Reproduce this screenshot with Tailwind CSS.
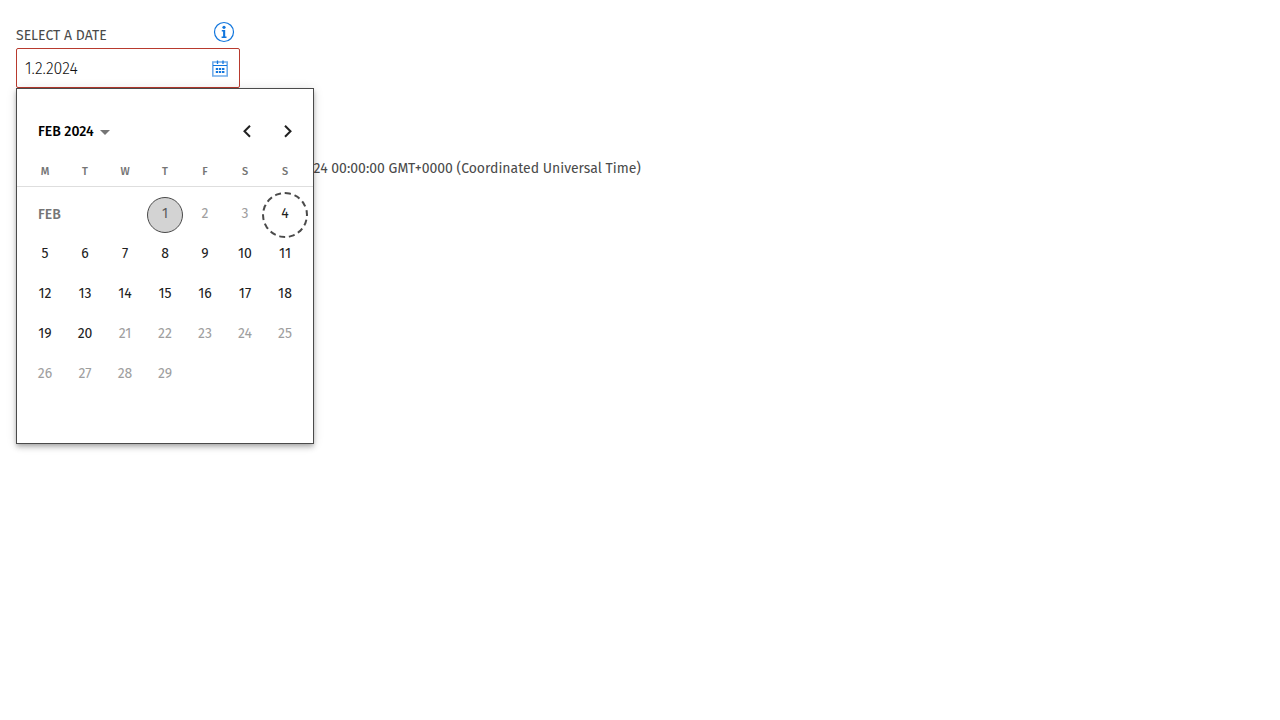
<!DOCTYPE html>
<html lang="en">
<head>
<meta charset="utf-8">
<meta name="viewport" content="width=device-width, initial-scale=1">
<title>Select a date</title>
<script src="https://cdn.jsdelivr.net/npm/@tailwindcss/browser@4"></script>
</head>
<body class="min-h-screen bg-white font-['Fira_Sans','Noto_Sans',sans-serif] text-sm text-[#4a4a4a]">
<main class="min-h-screen px-4 pt-5">
  <div class="relative w-56">
    <div class="flex h-7 items-start justify-between pr-1">
      <label for="date" class="pt-1.5 text-sm leading-5">SELECT A DATE</label>
      <button type="button" aria-label="Information" class="text-[#1276dd]">
        <svg class="size-6" viewBox="0 0 24 24" fill="none">
          <circle cx="12" cy="12" r="9.5" stroke="currentColor" stroke-width="1.2"/>
          <circle cx="12" cy="7.3" r="1.6" fill="currentColor"/>
          <path d="M9.8 10h3.4v6.6h1.3V18H9.6v-1.4h1.5v-5.2H9.8z" fill="currentColor"/>
        </svg>
      </button>
    </div>
    <div class="flex h-10 items-center rounded-xs border border-[#b83a2e] pr-2.5 pl-2">
      <input id="date" type="text" value="1.2.2024" class="min-w-0 flex-1 pt-0.5 text-base font-light text-[#111] outline-none">
      <button type="button" aria-label="Open calendar" class="text-[#1276dd]">
        <svg class="size-[18px]" viewBox="0 0 18 18" fill="none" stroke="currentColor">
          <path d="M1.8 3h14.4v14H1.8z" stroke-width="1.6" stroke-opacity=".6"/>
          <path d="M2 6.5h14" stroke-width="1"/>
          <path d="M6.5 1.5V5M12 1.5V5" stroke-width="1.3"/>
          <path d="M4.8 10h2.4M8 10h2.2M11 10h2.4M4.8 13h2.4M8 13h2.2M11 13h2.4" stroke-width="2.2"/>
        </svg>
      </button>
    </div>

    <section aria-label="Calendar" class="absolute top-full left-0 z-10 w-[298px] border border-[#4a4a4a] bg-white px-2 pt-[22px] pb-[48px] shadow-[0_2px_4px_-1px_rgba(0,0,0,0.2),0_4px_5px_0_rgba(0,0,0,0.14),0_1px_10px_0_rgba(0,0,0,0.12)]">
      <div class="-mr-0.5 flex h-10 items-center pl-[13px]">
        <button type="button" class="flex items-center gap-1.5 pt-0.5 text-sm font-medium text-black">FEB 2024
          <svg class="h-[5px] w-2.5" viewBox="0 0 10 5"><path d="M0 0h10L5 5z" fill="#757575"/></svg>
        </button>
        <button type="button" aria-label="Previous month" class="ml-auto grid size-10 place-items-center text-[#212121]">
          <svg class="size-4" viewBox="0 0 16 16" fill="none" stroke="currentColor" stroke-width="2"><path d="M11 2.8 5.5 8.3l5.5 5.5"/></svg>
        </button>
        <button type="button" aria-label="Next month" class="grid size-10 place-items-center text-[#212121]">
          <svg class="size-4" viewBox="0 0 16 16" fill="none" stroke="currentColor" stroke-width="2"><path d="M6 2.8l5.5 5.5L6 13.8"/></svg>
        </button>
      </div>
      <table class="w-full table-fixed border-collapse text-center">
        <thead class="text-[11px] text-[#757575]">
          <tr class="h-[35px]"><th scope="col" class="pt-1.5 font-medium">M</th><th scope="col" class="pt-1.5 font-medium">T</th><th scope="col" class="pt-1.5 font-medium">W</th><th scope="col" class="pt-1.5 font-medium">T</th><th scope="col" class="pt-1.5 font-medium">F</th><th scope="col" class="pt-1.5 font-medium">S</th><th scope="col" class="pt-1.5 font-medium">S</th></tr>
          <tr><th colspan="7" class="h-[9px] p-0 align-top"><div class="-mx-2 border-t border-[#dedede]"></div></th></tr>
        </thead>
        <tbody id="days">
          <tr class="h-10"><td colspan="3" class="p-0 pl-[13px] text-left text-sm font-medium text-[#757575]">FEB</td></tr>
        </tbody>
      </table>
    </section>
  </div>
  <p class="mt-[71px] pl-[283px] text-sm leading-5 whitespace-nowrap">2024 00:00:00 GMT+0000 (Coordinated Universal Time)</p>
</main>
<script>
  const body = document.getElementById('days');
  const base = 'relative isolate block size-10 pb-0.5 text-sm leading-5 ';
  const enabled = 'text-[#212121]';
  const disabled = 'text-[#9e9e9e]';
  const selected = 'text-[#5a5a5a] before:absolute before:inset-0.5 before:-z-10 before:rounded-full before:border before:border-[#4a4a4a] before:bg-[#d3d3d3]';
  const today = 'text-[#212121] before:absolute before:-inset-[3px] before:-z-10 before:rounded-full before:border-2 before:border-dashed before:border-[#4a4a4a]';
  let row = body.rows[0];
  for (let day = 1; day <= 29; day++) {
    if (row.cells.length === (row === body.rows[0] ? 5 : 7)) {
      row = body.insertRow();
      row.className = 'h-10';
    }
    const cell = row.insertCell();
    cell.className = 'p-0';
    const button = document.createElement('button');
    button.type = 'button';
    button.textContent = day;
    button.disabled = day < 4 || day > 20;
    button.className = base + (day === 1 ? selected : day === 4 ? today : button.disabled ? disabled : enabled);
    cell.append(button);
  }
</script>
</body>
</html>
